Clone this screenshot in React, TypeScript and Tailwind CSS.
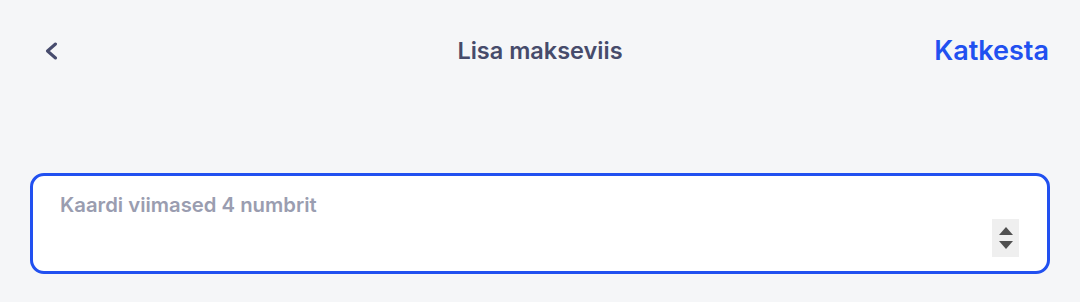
import React from "react";

export default function App() {
  return (
    <div
      className="w-full h-[302px] bg-[#f5f6f8] px-[30px]"
      style={{ fontFamily: "Inter, 'Noto Sans', sans-serif" }}
    >
      <div className="grid grid-cols-[1fr_auto_1fr] items-center h-[101px]">
        <div className="pl-[14px] flex items-center">
          <svg width="14" height="18" viewBox="0 0 14 18" fill="none">
            <path d="M11.5 2 L3.5 9 L11.5 16" stroke="#474c6e" strokeWidth="3" strokeLinecap="round" strokeLinejoin="round" />
          </svg>
        </div>
        <div className="text-[23.5px] font-semibold text-[#464b6b] leading-none">Lisa makseviis</div>
        <div className="flex justify-end pr-[1px]">
          <span className="text-[27px] font-semibold text-[#2150f0] leading-none">Katkesta</span>
        </div>
      </div>
      <div className="mt-[72px] h-[101px] rounded-[14px] border-[3px] border-[#2150f0] bg-white pl-[27px] pr-[28px] pt-[15px] flex flex-col">
        <div className="text-[20.3px] font-semibold text-[#9a9db0] leading-[28px]">Kaardi viimased 4 numbrit</div>
        <div className="flex justify-end">
          <div className="w-[27px] h-[38px] bg-[#efefef] flex flex-col items-center justify-center gap-[6px]">
            <svg width="14" height="8" viewBox="0 0 14 8"><path d="M7 0 L14 8 L0 8 Z" fill="#505050" /></svg>
            <svg width="14" height="8" viewBox="0 0 14 8"><path d="M0 0 L14 0 L7 8 Z" fill="#505050" /></svg>
          </div>
        </div>
      </div>
    </div>
  );
}
